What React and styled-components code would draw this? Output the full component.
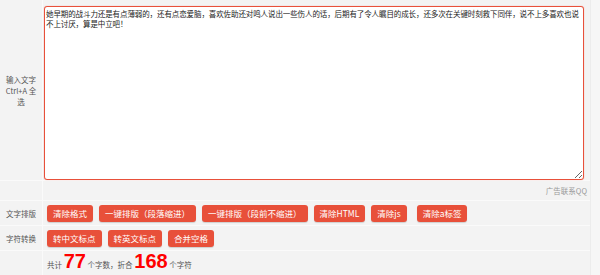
import styled, { createGlobalStyle } from "styled-components";

const GlobalStyle = createGlobalStyle`
  html, body {
    margin: 0;
    padding: 0;
    background: #f5f5f5;
  }
  body {
    font-family: "Noto Sans CJK SC", "Liberation Sans", sans-serif;
    overflow: hidden;
  }
`;

const text =
  "她早期的战斗力还是有点薄弱的，还有点恋爱脑，喜欢佐助还对鸣人说出一些伤人的话，后期有了令人瞩目的成长，还多次在关键时刻救下同伴，说不上多喜欢也说不上讨厌，算是中立吧！";

const layoutButtons = [
  { label: "清除格式" },
  { label: "一键排版（段落缩进）" },
  { label: "一键排版（段前不缩进）" },
  { label: "清除HTML" },
  { label: "清除js" },
  { label: "清除a标签", $wide: true },
];

const convertButtons = ["转中文标点", "转英文标点", "合并空格"];

const App = () => {
  return (
    <>
      <GlobalStyle />
      <Page>
        <Table>
          <Row $height={180}>
            <Label>
              输入文字
              <br />
              Ctrl+A 全选
            </Label>
            <EditorCell>
              <Editor defaultValue={text} spellCheck={false} />
            </EditorCell>
          </Row>
          <Row $height={19}>
            <Label />
            <AdCell>广告联系QQ</AdCell>
          </Row>
          <Row $height={24}>
            <Label>文字排版</Label>
            <Buttons>
              {layoutButtons.map((b) => (
                <Button key={b.label} $wide={b.$wide}>
                  {b.label}
                </Button>
              ))}
            </Buttons>
          </Row>
          <Row $height={24}>
            <Label>字符转换</Label>
            <Buttons>
              {convertButtons.map((b) => (
                <Button key={b}>{b}</Button>
              ))}
            </Buttons>
          </Row>
          <Row $height={24} $last>
            <Label />
            <Count>
              共计 <Num>77</Num> 个字数，折合 <Num>168</Num> 个字符
            </Count>
          </Row>
        </Table>
        <Gutter />
      </Page>
    </>
  );
};
export default App;

/***************************** styled components *****************************/

const Page = styled.div`
  display: flex;
  width: 600px;
  height: 275px;
  overflow: hidden;
`;

const Table = styled.div`
  width: 590px;
  flex: none;
  background: #f3f3f3;
`;

const Gutter = styled.div`
  flex: 1;
  background: #f6f6f6;
  border-left: 1px solid #ececec;
`;

const Row = styled.div`
  display: grid;
  grid-template-columns: 43px 1fr;
  height: ${(p) => p.$height}px;
  border-bottom: ${(p) => (p.$last ? "none" : "1px solid #fafafa")};
`;

const Label = styled.div`
  display: flex;
  align-items: center;
  justify-content: center;
  text-align: center;
  padding: 0 3px;
  border-right: 1px solid #fafafa;
  font-size: 7.5px;
  line-height: 11px;
  color: #555;
`;

const EditorCell = styled.div`
  padding: 6px 6px 0 1px;
`;

const Editor = styled.textarea`
  display: block;
  box-sizing: border-box;
  width: 540px;
  height: 174px;
  margin: 0;
  padding: 2px 0 2px 1px;
  border: 1px solid #e8503a;
  border-radius: 3px;
  box-shadow: 0 0 1px rgba(232, 80, 58, 0.6);
  outline: none;
  background: #fff;
  color: #222;
  font-family: "Noto Sans CJK SC", sans-serif;
  font-size: 7.5px;
  letter-spacing: -0.1px;
  line-height: 10px;
  word-break: break-all;
  overflow: hidden;
`;

const AdCell = styled.div`
  display: flex;
  align-items: center;
  justify-content: flex-end;
  padding-right: 3px;
  font-size: 7.5px;
  color: #999;
`;

const Buttons = styled.div`
  display: flex;
  align-items: center;
  gap: 6px;
  padding-left: 4px;
`;

const Button = styled.button`
  height: 17px;
  margin-left: ${(p) => (p.$wide ? "4px" : "0")};
  padding: 0 6px;
  border: none;
  border-radius: 3px;
  background: #e8503a;
  box-shadow: 0 1px 1px rgba(0, 0, 0, 0.15);
  color: #fff;
  font-family: "Noto Sans CJK SC", sans-serif;
  font-size: 8.5px;
  line-height: 17px;
  white-space: nowrap;
  cursor: pointer;
`;

const Count = styled.div`
  padding: 0 0 0 4px;
  font-size: 7.5px;
  color: #555;
  white-space: nowrap;
`;

const Num = styled.span`
  font-family: "Liberation Sans", Arial, sans-serif;
  font-size: 20px;
  font-weight: bold;
  color: #f00;
  line-height: 20px;
`;
